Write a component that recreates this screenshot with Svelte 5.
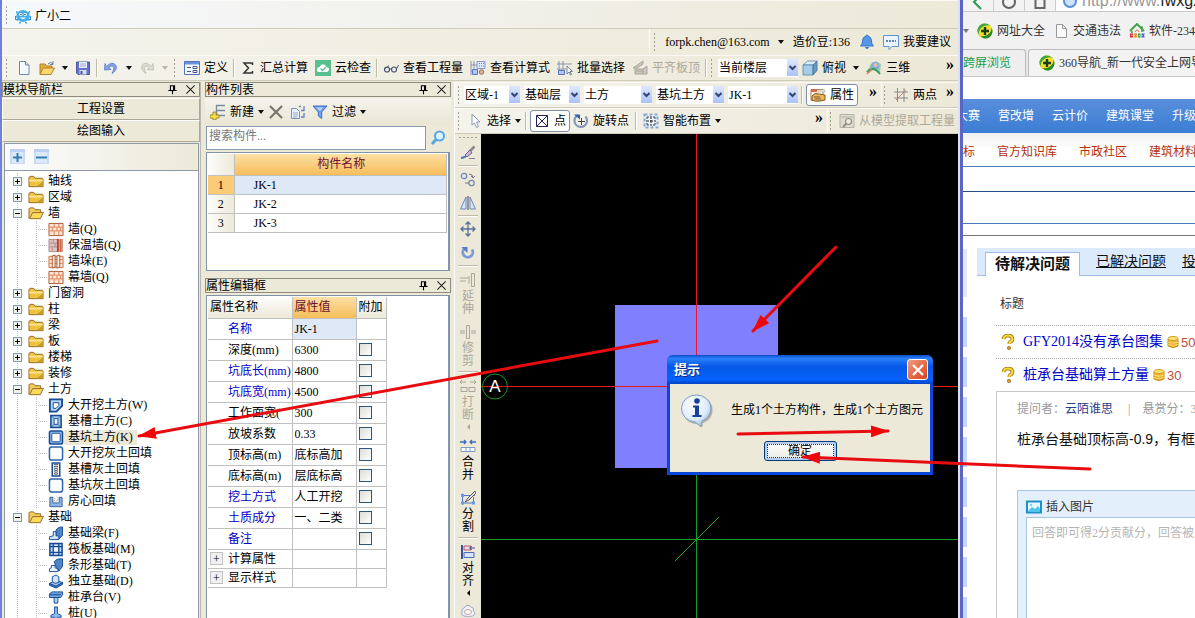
<script>
  const icons = {
    mascot: '<path d="M3 4 1 3 2 7zM13 4l2-1-1 4z" fill="#2c93d8"/><ellipse cx="8" cy="8" rx="6.6" ry="6" fill="#45aee8"/><path d="M1 8l-1 3 3 1M15 8l1 3-3 1M5 14v1.500M11 14v1.500" stroke="#2f92d4" stroke-width="1.600" fill="none"/><circle cx="5.800" cy="6.400" r="1.600" fill="#fff"/><circle cx="10.200" cy="6.400" r="1.600" fill="#fff"/><circle cx="6" cy="6.500" r=".7" fill="#124"/><circle cx="10" cy="6.500" r=".7" fill="#124"/><path d="M5 9.500q3 3 6 0z" fill="#fff"/>',
    page: '<path d="M3.500 1.500h6l3.500 3.500v9.500h-9.500z" fill="#f6f9fe" stroke="#7187a8"/><path d="M9.500 1.500v3.500h3.500" fill="#d5e0f2" stroke="#7187a8"/>',
    open: '<path d="M1 14V4h5l1.500 2H13v3" fill="#e7ac3b" stroke="#b0812c"/><path d="M1 14.500 4 8h11.500l-3.500 6.500z" fill="#ffd671" stroke="#b0812c"/><path d="M9 4q3-3 5 0M14 1v3.500h-3" stroke="#6f7f93" fill="none"/>',
    save: '<path d="M1.500 2h13v12.500H3l-1.500-1.500z" fill="#6372c6" stroke="#4c58a0"/><path d="M4 2h8v6H4z" fill="#e8ecfb"/><path d="M5 4h6M5 6h6" stroke="#a5aed8"/><path d="M4.500 10h7v4.500h-7z" fill="#d8dcf0"/><path d="M5.500 11h2v3h-2z" fill="#4c58a0"/>',
    undo: '<path d="M3.500 6.500Q9 .8 12.700 5q2.500 4.500-3.700 8.500 3-5.500 1-7.300-2-1-4 1.300L8 9.500 1.500 10 2 3.500z" fill="#85a5ea" stroke="#5675c6" stroke-width=".8"/>',
    redo: '<path d="M12.500 6.500Q7 .8 3.300 5 .8 9.500 7 13.500 4 8 6 6.200q2-1 4 1.300L8 9.500l6.500.5L14 3.500z" fill="#deddd4" stroke="#bbb9ae" stroke-width=".8"/>',
    form: '<path d="M.5 1.500h15v13H.5z" fill="#f3f7ff" stroke="#5273bd"/><path d="M1 2h14v2.500H1z" fill="#6b92dc"/><path d="M3 7.500h4M3 11.500h4" stroke="#445a8a"/><path d="M9 6.500h4v2H9zM9 10.500h4v2H9z" fill="#fff" stroke="#445a8a"/>',
    sigma: '<path d="M12.500 5V3H4l4.500 5L4 13h8.500v-2" fill="none" stroke="#333" stroke-width="1.500"/>',
    cloud: '<path d="M0 0h16v16H0z" fill="#58bf8e"/><path d="M4 12q-3-.5-2-3 .2-2 2.500-2Q6 3.500 9 4.500q2 .5 2.500 2.500 3 .5 2.500 3-.5 2-2.500 2z" fill="#fff"/><path d="M5.500 8.500 7.500 10.500 11 7" stroke="#58bf8e" fill="none" stroke-width="1.300"/>',
    glasses: '<circle cx="4" cy="9.500" r="2.500" fill="#e9eef6" stroke="#48566c" stroke-width="1.200"/><circle cx="11" cy="9.500" r="2.500" fill="#e9eef6" stroke="#48566c" stroke-width="1.200"/><path d="M6.500 9h2M1.500 9 6 5.500M13.500 9l2-4" stroke="#48566c" fill="none"/>',
    calc: '<path d="M1 1v14M4 1v14M1 5h6M1 11h4" stroke="#8a93a8" fill="none"/><path d="M7 1.500h8v7H7z" fill="#dfe8fb" stroke="#8398cc"/><path d="M9 3.500h5M9 6h5" stroke="#6781c8" stroke-dasharray="1 1"/><path d="M2.500 9.500h5v5h-5z" fill="#b5c6f2" stroke="#5c77c4"/><circle cx="11.500" cy="12" r="2.300" fill="#d8b09a" stroke="#9b7462"/>',
    batch: '<path d="M2 1v14M6 1v14M0 4h15M0 9h9" stroke="#8b95a6" fill="none"/><path d="M1.500 10.500h6v4h-6z" fill="#b2c4f2" stroke="#5673bf"/><path d="M10 6v8l2-2 1.500 3 1-.5L13 11.500h2.500z" fill="#fff" stroke="#74819a"/>',
    slab: '<path d="M1 8 11 1v3L5 8zM3 9h8v5H3zM11 9l4-3v8h-4M4 11h7" fill="#c9c7bb" stroke="#a9a79b"/>',
    cube: '<path d="M1 5 5.500 1H15l-4 4z" fill="#d9ecfa" stroke="#5483ad" stroke-width=".8"/><path d="M1 5h10v10H1z" fill="#a8cdeb" stroke="#5483ad" stroke-width=".8"/><path d="M11 5l4-4v9.500L11 15z" fill="#6798c2" stroke="#426c96" stroke-width=".8"/>',
    orbit: '<path d="M1 13 4 5l6-4 5 3-1 9-6-3z" fill="#9fcdaa"/><circle cx="9" cy="6" r="4" fill="#7fa9df"/><circle cx="9.500" cy="5" r="2" fill="#e3c0a5"/><path d="M1 12q6-7 13 2" stroke="#389f62" fill="none" stroke-width="2"/><path d="M1 14 6 9" stroke="#db7d60" stroke-width="1.500"/>',
    bell: '<path d="M8 1q1 0 1 1 3.500 1 3.500 5 0 3.500 2 5H1.500q2-1.500 2-5 0-4 3.500-5 0-1 1-1z" fill="#5596e8" stroke="#3b76c6"/><path d="M6 13h4q-.5 2-2 2t-2-2z" fill="#3b76c6"/>',
    chat: '<path d="M.5 1.500h15v11H9l-3 3v-3H.5z" fill="#eaf4ff" stroke="#5f96cf"/><path d="M3 7h10" stroke="#345f96" stroke-dasharray="2 1" stroke-width="1.300"/>',
    hand: '<path d="M1 2.500h12v11H1z" fill="#fff8e8" stroke="#b38b49"/><path d="M1 2h6v3H1z" fill="#d56b46"/><path d="M8 3h7v2H8z" fill="#eee" stroke="#999" stroke-width=".5"/><path d="M2 9q3-4 7-2l6 1v5l-5 1q-4 1-8-1z" fill="#e9b65b" stroke="#7f592c"/><path d="M4 10h6M5 12h6" stroke="#7f592c"/>',
    hash: '<path d="M4.500 1v14M11 1v14M1 5h14M1 11h14" stroke="#8a8888"/><path d="M3 13 13 3" stroke="#c07070" stroke-width=".8"/>',
    cursor: '<path d="M5 1v11l2.500-2 2 4.500 2-1L9.500 9H13z" fill="#fff" stroke="#8b9ab8"/>',
    xbox: '<path d="M2.500 2.500h11v11h-11zM2.500 2.500l11 11M13.500 2.500l-11 11" fill="none" stroke="#22265c"/>',
    rotpoint: '<path d="M12.500 3.500A6.300 6.300 0 1 1 3.500 3" fill="none" stroke="#8497b6" stroke-width="2.200"/><path d="M1 1.500h6v5z" fill="#2e66a4"/><path d="M8.500 5v7M5 8.500h7" stroke="#444"/>',
    smart: '<path d="M1.500 1.500h13v13h-13z" fill="#e8f1fc" stroke="#8fa6cc" stroke-dasharray="3 2" stroke-width="2"/><path d="M8 3v10M3 8h10" stroke="#222" stroke-dasharray="3 1"/><path d="M3 5h2V3M11 3v2h2M3 11h2v2M11 13v-2h2" stroke="#345" fill="none"/>',
    extract: '<path d="M1 1.500h14v13H1z" fill="#dddbd0" stroke="#b5b3a7"/><path d="M2 4h12" stroke="#b5b3a7"/><circle cx="9.500" cy="8.500" r="3" fill="#eeece2" stroke="#8f8d83" stroke-width="1.200"/><path d="M7.500 10.500 4 14" stroke="#8f8d83" stroke-width="2"/>',
    add: '<path d="M6 1.500h9M6 6.500h9M6 11.500h9M6.500 1v11" stroke="#7b8ba5" stroke-width="1.400" fill="none"/><path d="M3 8h3v3h3v3H6v2H3v-2H0v-3h3z" fill="#ffe23e" stroke="#8b7727" stroke-width=".8"/>',
    cross: '<path d="M2 2 14 14M14 2 2 14" stroke="#77776f" stroke-width="2.200"/>',
    copy: '<path d="M1.500 4.500h5l3 3v7h-8z" fill="#eaf0fc" stroke="#7c90bd"/><path d="M3 9h5M3 11h5M3 13h4" stroke="#93a4cb"/><path d="M9 2.500h2M14 2v4.500h-3M14 9v4h-3" fill="none" stroke="#6580c0" stroke-width="1.300"/>',
    funnel: '<path d="M1 2h14L9.700 8v6.500L6.300 12V8z" fill="#6da2ee" stroke="#416cbd"/><path d="M4 3.500h7L8 7z" fill="#bcd7fb"/>',
    lens: '<circle cx="9.500" cy="6" r="4.500" fill="#dff2ff" stroke="#55a7e4" stroke-width="2"/><path d="M6 9.500 2 14" stroke="#55a7e4" stroke-width="3"/>',
    plusbox: '<path d="M0 0h15v15H0z" fill="#cbd9f4"/><path d="M0 0h15v3H0z" fill="#bdcff5"/><path d="M2 3h11v11H2z" fill="#dce9fb"/><path d="M7.500 4v9M3 8.500h9" stroke="#327eae" stroke-width="2"/>',
    minusbox: '<path d="M0 0h15v15H0z" fill="#cbd9f4"/><path d="M0 0h15v3H0z" fill="#bdcff5"/><path d="M2 3h11v11H2z" fill="#dce9fb"/><path d="M2 8.500h11" stroke="#327eae" stroke-width="2"/>',
    folder: '<path d="M.5 13.500v-10l1-1h4l1.500 2h7.500l1 1v8z" fill="#f0c23f" stroke="#8e6b1f"/><path d="M1 6h14v2H1z" fill="#ffe693"/><path d="M9 13l6-5v5z" fill="#ce9a27"/>',
    folderopen: '<path d="M.5 13.500V3l1-1h4L7 4h6v3" fill="#f3cb58" stroke="#8e6b1f"/><path d="M1 13.500 4.500 7H16l-3.500 6.500z" fill="#fbd85e" stroke="#8e6b1f"/>',
    wall: '<path d="M.5 1.500h15v13H.5z" fill="#fde8da" stroke="#a8532c"/><path d="M1 5.500h14M1 9.500h14M6 2v3.500M11 2v3.500M4 6v3.500M9 6v3.500M13 6v3.500M6 10v4M11 10v4" stroke="#dd7a48" fill="none"/>',
    wallwarm: '<path d="M.5 1.500h10v13H.5z" fill="#dcc5c4" stroke="#b08785"/><path d="M1 5.500h9M1 9.500h9M5 2v3.500M7 6v3.500M4 10v4" stroke="#b58a89"/><path d="M9 1h6v14H9z" fill="#b4452b"/><path d="M11.500 1v14M13.500 1v14" stroke="#ffb895"/>',
    wallpier: '<path d="M.5 2.500h15v12H.5z" fill="#fde8da" stroke="#c66a3c"/><path d="M1 6h14M1 10h14" stroke="#dd7a48"/><path d="M4 2l3-1v13l-3 1zM9 2l3-1v13l-3 1z" fill="#fff3ea" stroke="#a8532c"/>',
    bigdig: '<path d="M1.500 1.500h13v7l-6 6h-7z" fill="#b2d6fa" stroke="#174a91" stroke-width="2"/><path d="M5 5h6v3L8 11H5z" fill="#fff" stroke="#174a91"/>',
    trench: '<path d="M2.500 1.500h11v13h-11z" fill="#9fc6f1" stroke="#174a91" stroke-width="1.600"/><path d="M6 5h4v6H6z" fill="#fff" stroke="#174a91"/><path d="M3 2l3 3M13 2l-3 3M3 14l3-3M13 14l-3-3" stroke="#174a91" stroke-width=".8"/>',
    pit: '<rect x="1" y="1" width="14" height="14" rx="2" fill="#8dbcf0" stroke="#174a91" stroke-width="1.600"/><rect x="3.500" y="3.500" width="9" height="9" rx="1" fill="#fff" stroke="#174a91"/>',
    fill: '<rect x="1" y="1" width="14" height="14" rx="2.500" fill="#fafdff" stroke="#2d64a8" stroke-width="1.600"/>',
    trenchfill: '<path d="M4 1h8v14H4z" fill="#fff" stroke="#174a91" stroke-width="1.600"/><path d="M6.500 2v12M9.500 2v12" stroke="#333" stroke-dasharray="1 1" stroke-width="1.500"/><path d="M8 1.500v13" stroke="#333" stroke-dasharray="1 1" stroke-dashoffset="1" stroke-width="1.500"/>',
    room: '<path d="M1.500 3.500h3v6h7v-6h3v10h-13z" fill="#8db5e8" stroke="#355e9b"/><path d="M5 8l2-2M8 8l3-3M6 4l1 1M9 3l1 1" stroke="#888"/>',
    beam: '<path d="M8 5q1-4 7-4v9l-4 4H8z" fill="#4e83c4" stroke="#174a91"/><path d="M1 14.500v-3l4-1V6h3v4.500h3v4z" fill="#cde3fa" stroke="#174a91"/>',
    raft: '<path d="M1.500 1.500h13v13h-13z" fill="#b9d8f9" stroke="#174a91" stroke-width="1.600"/><path d="M5 1v14M11 1v14M1 5h14M1 11h14" stroke="#174a91" stroke-width="1.400"/><path d="M6 6h4v4H6z" fill="#fff"/>',
    strip: '<path d="M6 4q3-4 9-3v8l-4 5-3-5z" fill="#4e83c4" stroke="#174a91"/><path d="M1 14.500v-3L3 10.500V8h4v2.500l3 1v3z" fill="#e4f1fe" stroke="#174a91"/>',
    indep: '<path d="M1 10l7-3 7 2-7 5z" fill="#9ac0ec" stroke="#174a91"/><path d="M1 10v2l7 3 7-4V9l-7 4z" fill="#3f77bd" stroke="#174a91"/><path d="M4 3l4-2 3 2v6l-4 1-3-2z" fill="#cfe3fa" stroke="#174a91"/>',
    pilecap: '<path d="M1 4l3-2h11v3l-2 3H1z" fill="#6fa3e0" stroke="#174a91"/><path d="M1 5h12M6 8h4v6H6z" fill="#a9cdf5" stroke="#174a91"/>',
    pile: '<path d="M6.500 1h3v7l4 2v2h-4L8 15l-1.500-3h-4v-2l4-2z" fill="#8dbcf0" stroke="#174a91"/>',
    brush: '<path d="M1 13q5-1 6-3" fill="none" stroke="#5373b8" stroke-width="2"/><path d="M14.500 1.500 9 7" stroke="#8a8a8a" stroke-width="2.500"/><path d="M10 5 5 10l2 2 5-4z" fill="#c9b4e0" stroke="#7b6a90"/><path d="M9 13.500h6" stroke="#8a7aa0"/>',
    copyobj: '<circle cx="4" cy="5" r="2.700" fill="none" stroke="#7088c0" stroke-width="1.300"/><circle cx="11.500" cy="12" r="2.700" fill="none" stroke="#7b8ab0" stroke-width="1.300"/><path d="M9 3q4 0 4 4M11 5l2 2 2-2M5 12h4" stroke="#778" fill="none"/>',
    mirror: '<path d="M6 2v12H.5zM10 2v12h5.500z" fill="#d5e5fb" stroke="#6d87bb"/><path d="M8 1v14" stroke="#445"/>',
    move: '<path d="M8 1v14M1 8h14M5.500 3.500 8 1l2.500 2.500M5.500 12.500 8 15l2.500-2.500M3.500 5.500 1 8l2.500 2.500M12.500 5.500 15 8l-2.500 2.500" fill="none" stroke="#5b7097" stroke-width="1.300"/>',
    rotate: '<path d="M12 4.500A5 5 0 1 1 4 4" fill="none" stroke="#7a9bdc" stroke-width="2.800"/><path d="M1.500 2h6v6z" fill="#587ac0"/>',
    extend: '<path d="M0 6h8M0 9h6M9 4v8M11.500 1.500h3v13h-3z" stroke="#a8a69a" fill="none"/>',
    trim: '<path d="M0 7h5M11 7h5M0 9h5M11 9h5M6.500 1.500h3v13h-3z" stroke="#a8a69a" fill="none"/>',
    split: '<path d="M0 4h6M10 4h6M2 2 0 4l2 2M14 2l2 2-2 2M1 9.500h6v4H1zM9 9.500h6v4H9z" stroke="#a8a69a" fill="none"/>',
    merge: '<path d="M0 4h6M10 4h6M4 2l2 2-2 2M12 2l-2 2 2 2" stroke="#3f69c0" stroke-width="1.300" fill="none"/><path d="M1 9.500h14v4H1zM6 9v5M10 9v5" stroke="#7c99c9" fill="#fff"/>',
    cut: '<path d="M1 5.500h14M1 13h14M2.500 3.500v11M13.500 7v7" stroke="#4a7bd0" fill="none"/><path d="M15 1 8 8l-3 4 4-2 7-7z" fill="#ddd" stroke="#444" stroke-width=".8"/><path d="M1 4h3v3H1zM1 11.500h3v3H1zM12 11.500h3v3h-3z" fill="#6d98e4"/>',
    align: '<path d="M2 1v14" stroke="#394ea0" stroke-width="2"/><path d="M4 2h7v4H4z" fill="#f6d9d9" stroke="#b05c6c"/><path d="M4 8.500h10v5H4z" fill="#d9e4fb" stroke="#4c6db9"/><path d="M15 4h-5M11.500 2l-2 2 2 2" stroke="#394ea0" fill="none"/>',
    cloudline: '<path d="M4 13q-4-1-2-4-1-3 2-4 3-5 7-1 3 0 2.500 4 3 3-1 5-4 1-8.500 0z" fill="#f3f3fa" stroke="#9ba6c8"/><ellipse cx="8" cy="9" rx="3.500" ry="2.500" fill="#fff" stroke="#d89a9a"/>',
    plus360: '<circle cx="8" cy="8" r="7.500" fill="#f4de2d"/><path d="M1 5Q4-1 10 .8L14 3Q8 1 4 5t-1 8Q-1 9 1 5z" fill="#3ba43a"/><path d="M15 11q-3 6-9 4l-3-2q6 1 9.500-3t1-7q3 4 1.500 8z" fill="#268a2c"/><path d="M8 4v8M4 8h8" stroke="#163e17" stroke-width="2.400"/>',
    bookmark: '<path d="M3.500 1.500h6l4 4v9h-10zM9.500 1.500v4h4" fill="#fafafa" stroke="#999"/>',
    house: '<path d="M1 8 8 1l7 7" fill="none" stroke="#49a04a" stroke-width="2"/><path d="M3 8v2M13 3v6" stroke="#49a04a" stroke-width="1.500"/><path d="M6 9q2-4 4 0" stroke="#e06a43" fill="none"/><path d="M1 12.500h3" stroke="#d33" stroke-width="4"/><path d="M5 12.500h3" stroke="#e88b2b" stroke-width="4"/><path d="M9 12.500h2.500" stroke="#3b9a48" stroke-width="4"/><path d="M12.500 12.500h3" stroke="#3a6fc9" stroke-width="4"/><path d="M0 12.500h16" stroke="#fff" stroke-dasharray="1 1.500" stroke-width=".8"/>',
    question: '<path d="M3.500 5Q4 1.500 8 1.500t4.500 3.300Q12.500 7 10 8.200 9.300 8.700 9.300 10" fill="none" stroke="#9a6b14" stroke-width="3.600"/><path d="M3.500 5Q4 1.500 8 1.500t4.500 3.300Q12.500 7 10 8.200 9.300 8.700 9.300 10" fill="none" stroke="#fbd92f" stroke-width="2.200"/><circle cx="9" cy="14" r="1.700" fill="#d79a28" stroke="#8a6015" stroke-width=".6"/>',
    coin: '<path d="M3 5v7q5 3 10 0V5z" fill="#eeb22d" stroke="#c9861b"/><ellipse cx="8" cy="4.500" rx="5" ry="2" fill="#fde37b" stroke="#d59c26"/><path d="M3 8q5 2.500 10 0M3 10.500q5 2.500 10 0" fill="none" stroke="#fce07a"/>',
    image: '<path d="M1 2.500h14v11H1z" fill="#e7f8ff" stroke="#1f8fc8" stroke-width="2"/><path d="M2 12 6 8l3 2 3-3 2 3v3H2z" fill="#4fc3ee"/><circle cx="5" cy="6" r="1.200" fill="#79d2f2"/>',
    pin: '<path d="M5 2.500h6v7H5zM9.500 3v6.500M2 9.500h12M8 10v5" fill="none" stroke="#000" stroke-width="1.600"/>',
    close: '<path d="M2 2l12 12M14 2 2 14" stroke="#222" stroke-width="1.500"/>'
  };

  const tree = [
    { t: '轴线' }, { t: '区域' },
    { t: '墙', kids: [['墙', 'Q', 'wall'], ['保温墙', 'Q', 'wallwarm'], ['墙垛', 'E', 'wallpier'], ['幕墙', 'Q', 'wall']] },
    { t: '门窗洞' }, { t: '柱' }, { t: '梁' }, { t: '板' }, { t: '楼梯' }, { t: '装修' },
    { t: '土方', kids: [['大开挖土方', 'W', 'bigdig'], ['基槽土方', 'C', 'trench'], ['基坑土方', 'K', 'pit'], ['大开挖灰土回填', '', 'fill'], ['基槽灰土回填', '', 'trenchfill'], ['基坑灰土回填', '', 'fill'], ['房心回填', '', 'room']] },
    { t: '基础', kids: [['基础梁', 'F', 'beam'], ['筏板基础', 'M', 'raft'], ['条形基础', 'T', 'strip'], ['独立基础', 'D', 'indep'], ['桩承台', 'V', 'pilecap'], ['桩', 'U', 'pile']] }
  ];

  const props = [
    ['深度(mm)', '6300', 0], ['坑底长(mm)', '4800', 1], ['坑底宽(mm)', '4500', 1], ['工作面宽(', '300', 0],
    ['放坡系数', '0.33', 0], ['顶标高(m)', '底标高加', 0], ['底标高(m)', '层底标高', 0],
    ['挖土方式', '人工开挖', 1], ['土质成分', '一、二类', 1], ['备注', '', 1]
  ];

  const combos = [['区域-1', 56], ['基础层', 56], ['土方', 68], ['基坑土方', 68], ['JK-1', 70]];

  const strip = [
    { i: 'brush' }, { sep: 1 }, { i: 'copyobj' }, { i: 'mirror' }, { sep: 1 }, { i: 'move' }, { i: 'rotate' }, { sep: 1 },
    { i: 'extend', t: '延伸', off: 1 }, { i: 'trim', t: '修剪', off: 1 }, { sep: 1 },
    { i: 'split', t: '打断', off: 1, more: 1 }, { i: 'merge', t: '合并' }, { i: 'cut', t: '分割' }, { sep: 1 },
    { i: 'align', t: '对齐', more: 1 }, { i: 'cloudline' }
  ];
</script>

{#snippet icon(name)}
  <svg class="ic" viewBox="0 0 16 16" aria-hidden="true">{@html icons[name]}</svg>
{/snippet}

{#snippet tool(name, label, off = false)}
  <button class="tool" class:off>
    {@render icon(name)}{#if label}<span>{label}</span>{/if}
  </button>
{/snippet}

{#snippet drop(off = false)}
  <button class="drop" class:off aria-label="▾"><i></i></button>
{/snippet}

{#snippet combo(label, width)}
  <span class="combo" style="width:{width}px">
    <select aria-label={label}><option>{label}</option></select>
    <svg viewBox="0 0 11 17" aria-hidden="true"><path d="M2.500 7l3 3 3-3" fill="none" stroke="#31456f" stroke-width="2" /></svg>
  </span>
{/snippet}

{#snippet caption(label)}
  <header class="caption">
    <h2>{label}</h2>
    <button>{@render icon('pin')}</button>
    <button>{@render icon('close')}</button>
  </header>
{/snippet}

<div class="desktop">
  <main class="cad">
    <div class="bar brand"><span class="grip"></span>{@render tool('mascot', '广小二')}</div>
    <div class="bar account">
      <div class="dock">
        <span class="grip"></span>
        <button class="tool">forpk.chen@163.com</button>
        {@render drop()}
        <span class="beans">造价豆:136</span>
        {@render tool('bell')}
        {@render tool('chat', '我要建议')}
      </div>
    </div>
    <div class="bar main-tools">
      <span class="grip"></span>
      {@render tool('page')}{@render tool('open')}{@render drop()}{@render tool('save')}
      <span class="sep"></span>
      {@render tool('undo')}{@render drop()}{@render tool('redo')}{@render drop(true)}
      <span class="grip"></span>
      {@render tool('form', '定义')}
      <span class="sep"></span>
      {@render tool('sigma', '汇总计算')}{@render tool('cloud', '云检查')}
      <span class="sep"></span>
      {@render tool('glasses', '查看工程量')}{@render tool('calc', '查看计算式')}{@render tool('batch', '批量选择')}{@render tool('slab', '平齐板顶', true)}
      <span class="sep"></span><span class="grip"></span>
      {@render combo('当前楼层', 80)}
      {@render tool('cube', '俯视')}{@render drop()}{@render tool('orbit', '三维')}
      <button class="more">»</button>
    </div>

    <div class="work">
      <nav class="panel modules">
        {@render caption('模块导航栏')}
        <button class="wide">工程设置</button>
        <button class="wide">绘图输入</button>
        <div class="box">
          <div class="tree-tools">{@render icon('plusbox')}{@render icon('minusbox')}</div>
          <ul class="tree">
            {#each tree as node}
              <li>
                <div class="row"><span class="toggle" class:plus={!node.kids}></span>{@render icon(node.kids ? 'folderopen' : 'folder')}<span>{node.t}</span></div>
                {#if node.kids}
                  <ul>
                    {#each node.kids as [name, key, ic]}
                      <li class="row leaf">{@render icon(ic)}<span class:current={key === 'K'}>{name}{key ? `(${key})` : ''}</span></li>
                    {/each}
                  </ul>
                {/if}
              </li>
            {/each}
          </ul>
        </div>
      </nav>

      <section class="panel parts">
        {@render caption('构件列表')}
        <div class="bar list-tools">
          {@render tool('add', '新建')}{@render drop()}{@render tool('cross')}{@render tool('copy')}{@render tool('funnel', '过滤')}{@render drop()}
        </div>
        <div class="search"><input type="text" placeholder="搜索构件..." aria-label="搜索构件" /><button aria-label="搜索">{@render icon('lens')}</button></div>
        <div class="frame names">
          <table>
            <thead><tr><th class="idx"></th><th class="hot">构件名称</th></tr></thead>
            <tbody>
              {#each [1, 2, 3] as n}
                <tr class:sel={n === 1}><th class="idx">{n}</th><td>JK-{n}</td></tr>
              {/each}
            </tbody>
          </table>
        </div>
        {@render caption('属性编辑框')}
        <div class="frame props">
          <table>
            <thead><tr><th>属性名称</th><th class="hot">属性值</th><th>附加</th></tr></thead>
            <tbody>
              <tr class="sel"><td class="blue">名称</td><td>JK-1</td><td></td></tr>
              {#each props as [name, value, blue]}
                <tr><td class:blue>{name}</td><td>{value}</td><td><input type="checkbox" aria-label={name} /></td></tr>
              {/each}
              {#each ['计算属性', '显示样式'] as name}
                <tr class="group"><td><button>+</button>{name}</td><td></td><td></td></tr>
              {/each}
            </tbody>
          </table>
        </div>
      </section>

      <section class="editor">
        <div class="bar">
          <span class="grip"></span>
          <div class="combos">{#each combos as [label, width]}{@render combo(label, width)}{/each}</div>
          <span class="sep"></span>
          <button class="tool pressed">{@render icon('hand')}<span>属性</span></button>
          <button class="more">»</button>
          <div class="tail short"><span class="grip"></span>{@render tool('hash', '两点')}<button class="more">»</button></div>
        </div>
        <div class="bar">
          <span class="grip"></span>
          {@render tool('cursor', '选择')}{@render drop()}
          <span class="sep"></span>
          <button class="tool pressed">{@render icon('xbox')}<span>点</span></button>
          {@render tool('rotpoint', '旋转点')}
          <span class="sep"></span>
          {@render tool('smart', '智能布置')}{@render drop()}
          <button class="more">»</button>
          <div class="tail"><span class="grip"></span>{@render tool('extract', '从模型提取工程量', true)}</div>
        </div>
        <div class="stage">
          <div class="strip">
            <span class="grip-h"></span>
            {#each strip as s}
              {#if s.sep}<span class="rule"></span>
              {:else}
                <button class:off={s.off} class:labelled={s.t}>
                  {@render icon(s.i)}
                  {#if s.t}<span>{s.t}</span>{/if}
                  {#if s.more}<i></i>{/if}
                </button>
              {/if}
            {/each}
          </div>
          <div class="canvas">
            <svg width="100%" height="100%" aria-hidden="true">
              <rect x="134" y="171" width="163" height="163" fill="#8080ff" />
              <g shape-rendering="crispEdges">
                <rect x="215" y="0" width="1" height="253" fill="#f01820" />
                <rect x="0" y="252" width="100%" height="1" fill="#f01820" />
                <rect x="215" y="253" width="1" height="100%" fill="#12a02c" />
                <rect x="0" y="405" width="100%" height="1" fill="#12a02c" />
              </g>
              <path d="M194 427l44-44" stroke="#12a02c" />
              <circle cx="14" cy="252.500" r="12.500" fill="#000" stroke="#149a2c" />
              <path d="M0 252.500h27" stroke="#d01420" />
              <text x="14" y="258" text-anchor="middle">A</text>
            </svg>
            <div class="dialog" role="dialog" aria-label="提示">
              <header><h2>提示</h2><button aria-label="关闭"><svg viewBox="0 0 16 16"><path d="M3 3l10 10M13 3 3 13" stroke="#fff" stroke-width="2.200" /></svg></button></header>
              <div class="msg">
                <svg viewBox="0 0 34 34" aria-hidden="true">
                  <defs><radialGradient id="bubble" cx=".4" cy=".3" r=".8"><stop offset="0" stop-color="#fff" /><stop offset=".6" stop-color="#dcebfb" /><stop offset="1" stop-color="#86acd8" /></radialGradient></defs>
                  <path d="M18 2a15 14 0 1 1-3 28 15 14 0 0 1 3-28zM16 28l6 5-1-7z" fill="#777" opacity=".5" />
                  <path d="M16 1a14.500 13.500 0 0 1 5 26l-1 6-6-5A14.500 13.500 0 0 1 16 1z" fill="url(#bubble)" stroke="#7f9dc0" />
                  <circle cx="16" cy="7" r="2.800" fill="#16409a" /><path d="M12 11.500h6v9.500h2.500v2h-9v-2H14v-7.500h-2z" fill="#16409a" />
                </svg>
                <p>生成1个土方构件，生成1个土方图元</p>
              </div>
              <button class="ok">确定</button>
            </div>
          </div>
        </div>
      </section>
    </div>
  </main>

  <aside class="browser">
    <div class="address">
      <button><svg viewBox="0 0 16 16"><path d="M11 1 4 8l7 7" fill="none" stroke="#2e9a4a" stroke-width="2" /></svg></button>
      <button><svg viewBox="0 0 16 16"><circle cx="8" cy="8" r="6" fill="none" stroke="#666" stroke-width="2" /></svg></button>
      <button><svg viewBox="0 0 16 16"><path d="M3.500 3v11h9V3" fill="none" stroke="#666" stroke-width="2" /></svg></button>
      <div class="url"><svg viewBox="0 0 16 16"><circle cx="8" cy="8" r="6" fill="#cfe0fa" stroke="#5b8fd9" stroke-width="2" /></svg><span>http://www.<b>fwxgx</b></span></div>
    </div>
    <div class="marks">
      <i class="caret"></i>
      <a href="#top">{@render icon('plus360')}网址大全</a>
      <a href="#top">{@render icon('bookmark')}交通违法</a>
      <a href="#top">{@render icon('house')}软件-2345</a>
    </div>
    <div class="tabs"><a class="green" href="#top">跨屏浏览</a><a class="on" href="#top">{@render icon('plus360')}360导航_新一代安全上网导航</a></div>
    <nav class="blue-nav"><a href="#top">大赛</a><a href="#top">营改增</a><a href="#top">云计价</a><a href="#top">建筑课堂</a><a href="#top">升级</a></nav>
    <nav class="sub-nav"><a href="#top">标</a><a href="#top">官方知识库</a><a href="#top">市政社区</a><a href="#top">建筑材料</a></nav>
    <div class="bands"></div>
    <div class="page">
      <div class="beads"></div>
      <div class="qa">
        <div class="qtabs"><a class="on" href="#top">待解决问题</a><a href="#top">已解决问题</a><a href="#top">投票</a></div>
        <div class="list">
          <h3>标题</h3>
          <div class="q">{@render icon('question')}<a href="#top">GFY2014没有承台图集</a>{@render icon('coin')}<em>50</em></div>
          <div class="q">{@render icon('question')}<a href="#top">桩承台基础算土方量</a>{@render icon('coin')}<em>30</em></div>
          <div class="detail">
            <p class="meta">提问者：<a href="#top">云陌谁思</a><span>|</span>悬赏分：30</p>
            <p class="body">桩承台基础顶标高-0.9，有框架</p>
            <div class="reply">
              <button>{@render icon('image')}插入图片</button>
              <textarea aria-label="回答" placeholder="回答即可得2分贡献分，回答被采纳"></textarea>
            </div>
          </div>
        </div>
      </div>
    </div>
  </aside>

  <svg class="ink" aria-hidden="true">
    <defs><marker id="tip" viewBox="0 0 18 12" refX="17" refY="6" markerWidth="18" markerHeight="12" markerUnits="userSpaceOnUse" orient="auto"><path d="M0 0 18 6 0 12z" fill="#f00808" /></marker></defs>
    <g stroke="#e80c10" stroke-width="3" stroke-linecap="round">
      <path d="M657 341 139 436" marker-end="url(#tip)" /><path d="M836 247 753 331" marker-end="url(#tip)" />
      <path d="M738 434 888 431" marker-end="url(#tip)" /><path d="M1090 469 803 457" marker-end="url(#tip)" />
    </g>
  </svg>
</div>

<style>
  :global(body) { margin: 0; overflow: hidden; }
  .desktop { position: relative; display: flex; height: 100vh; overflow: hidden; font: 12px/16px "Liberation Serif", "Noto Sans CJK SC", sans-serif; color: #000; white-space: nowrap; }
  .desktop * { box-sizing: border-box; }
  button, input, select, textarea { font: inherit; color: inherit; margin: 0; padding: 0; border: 0; background: none; border-radius: 0; }
  h2, h3, p, ul { margin: 0; padding: 0; font-size: 12px; font-weight: normal; list-style: none; }
  a { color: inherit; text-decoration: none; }
  .ic { width: 16px; height: 16px; flex: none; display: block; }

  .cad { flex: 1; min-width: 0; display: flex; flex-direction: column; background: #ece9d8; border-left: 2px solid #6f7fdc; border-right: 3px solid #5a65c4; box-shadow: inset -2px 0 #dfe0ee; padding-right: 2px; }
  .bar { display: flex; align-items: center; height: 26px; flex: none; padding-left: 2px; border-top: 1px solid #fbfaf4; border-bottom: 1px solid #cfccba; background: linear-gradient(90deg, #f4f3ec, #ece9d8); overflow: hidden; }
  .brand { height: 29px; background: linear-gradient(90deg, #f6f9fc, #f1f0ea 50%, #ece9d8); }
  .brand .tool { padding-top: 2px; }
  .account { justify-content: flex-end; border: 0; padding-right: 4px; }
  .dock { display: flex; align-items: center; height: 26px; padding-left: 2px; gap: 2px; border-left: 1px solid #fff; }
  .beans { margin: 0 4px; }
  .main-tools { gap: 1px; }
  .grip { width: 3px; height: 20px; flex: none; margin: 0 4px 0 1px; background: radial-gradient(circle, #a3a08f 1px, transparent 1px) 0 0 / 3px 4px; }
  .sep { width: 2px; height: 18px; flex: none; margin: 0 1px; border-left: 1px solid #bdbaa8; border-right: 1px solid #fff; }
  .tool { display: flex; align-items: center; gap: 4px; height: 22px; padding: 0 3px; flex: none; }
  .off { color: #aca899; }
  .drop { width: 12px; height: 20px; flex: none; display: grid; place-items: center; }
  .list-tools .drop, .editor .drop { width: 8px; }
  .drop i { border: 3px solid transparent; border-top: 4px solid #111; border-bottom: 0; }
  .drop.off i { border-top-color: #bbb8aa; }
  .more { margin-left: auto; padding: 0 4px 6px; font-size: 16px; font-weight: bold; line-height: 16px; }
  .tool.pressed { border: 1px solid #7f8fa8; border-radius: 3px; background: #fdfdfb; }
  .combo { display: flex; height: 18px; background: #fff; flex: none; }
  .combo select { appearance: none; flex: 1; min-width: 0; padding-left: 1px; }
  .combo svg { width: 11px; height: 17px; flex: none; background: linear-gradient(#dfe8fd, #a9c3f7); }
  .combos { display: flex; gap: 4px; }
  .editor .sep { margin: 0 3px; }

  .work { flex: 1; min-height: 0; display: flex; padding-top: 1px; }
  .panel { display: flex; flex-direction: column; flex: none; min-height: 0; }
  .modules { width: 199px; border-right: 1px solid #bab8aa; }
  .parts { width: 246px; margin-left: 4px; }
  .caption { display: flex; align-items: center; height: 15px; flex: none; border: 1px solid #8e8c80; margin: 0 0 1px; }
  .caption h2 { flex: 1; line-height: 14px; }
  .caption button { width: 18px; height: 13px; display: grid; place-items: center; }
  .caption .ic { width: 11px; height: 11px; }
  .wide { height: 22px; flex: none; border: 1px solid #aba899; border-top-color: #fff; border-left-color: #fff; }
  .box { flex: 1; min-height: 0; display: flex; flex-direction: column; margin: 1px 1px 0 2px; border: 1px solid #8d99a8; border-bottom: 0; background: #fff; overflow: hidden; }
  .tree-tools { display: flex; gap: 8px; height: 27px; flex: none; padding: 5px 5px; border-bottom: 1px solid #8d99a8; background: linear-gradient(90deg, #fbfcfe, #ece9d8); }
  .tree { padding: 2px 0 0 8px; }
  .row { display: flex; align-items: center; height: 16px; }
  .row .ic { height: 15px; }
  .row > span:last-child { padding-left: 4px; }
  .toggle { width: 9px; height: 9px; flex: none; margin-right: 6px; border: 1px solid #7b9ab8; background: linear-gradient(#000, #000) center / 5px 1px no-repeat #f1f1ee; }
  .toggle.plus { background: linear-gradient(#000, #000) center / 5px 1px no-repeat, linear-gradient(#000, #000) center / 1px 5px no-repeat, #f1f1ee; }
  .tree > li { background: linear-gradient(#bbb 50%, transparent 50%) 4px 0 / 1px 2px repeat-y; }
  .tree li ul { margin-left: 23px; background: linear-gradient(#bbb 50%, transparent 50%) 0 0 / 1px 2px repeat-y; }
  .leaf::before { content: ""; width: 12px; height: 1px; background: linear-gradient(90deg, #bbb 50%, transparent 50%) 0 0 / 2px 1px repeat-x; }
  .leaf span { padding-left: 4px; height: 15px; line-height: 15px; }
  .leaf span.current { background: #ece9d8; padding-right: 4px; }

  .list-tools { border: 0; height: 27px; padding-left: 2px; background: linear-gradient(#f5f4ec, #e9e6d5); }
  .search { display: flex; height: 24px; flex: none; margin: 1px 1px 2px; }
  .search input { flex: 1; min-width: 0; border: 1px solid #8799ad; background: #fff; padding: 0 0 4px 2px; }
  .search input::placeholder { color: #777; opacity: 1; }
  .search button { width: 24px; display: grid; place-items: center; }
  .frame { background: #fff; border: 1px solid #8194a8; border-right-width: 2px; margin: 0 1px; padding: 1px; overflow: hidden; }
  .names { height: 119px; flex: none; margin-bottom: 7px; }
  .props { flex: 1; min-height: 0; margin-top: 1px; border-bottom: 0; }
  table { border-collapse: collapse; table-layout: fixed; }
  th, td { font-weight: normal; padding: 0; border: 1px solid #c0c0c0; height: 19px; line-height: 16px; overflow: hidden; text-align: left; }
  thead th { height: 21px; background: linear-gradient(#fdfdfb, #ece9d8); border-top: 0; padding-left: 2px; }
  thead th.hot { background: linear-gradient(#fce0a4, #f6bd5a); color: #701030; }
  .names table { width: 100%; }
  .names th:first-child { border-left: 0; }
  .names .idx { width: 26px; text-align: center; background: linear-gradient(90deg, #fdfdfb, #ece9d8); padding: 0; }
  .names .hot { text-align: center; }
  .names td { padding-left: 19px; }
  .names .sel .idx { background: #fbcb78; }
  .names .sel td { background: #dfe8f6; }
  .props table { width: 179px; }
  .props th:nth-child(1) { width: 84px; }
  .props th:nth-child(2) { width: 64px; }
  .props th:first-child, .props td:first-child { border-left: 0; }
  .props tbody td { height: 21px; padding-left: 2px; }
  .props tbody td:first-child { padding-left: 20px; }
  .props .sel td:nth-child(2) { background: #dfe8f6; }
  .props .blue { color: #0000c8; }
  .props input { appearance: none; display: block; width: 13px; height: 13px; border: 1px solid #2c5580; background: linear-gradient(135deg, #dcdcd7, #fff); }
  .props tbody .group td { height: 19px; }
  .props tbody .group td:first-child { padding-left: 2px; }
  .group button { width: 13px; height: 13px; margin-right: 5px; border: 1px solid #c0c0c0; background: #f0f0f0; line-height: 10px; }

  .editor { flex: 1; min-width: 0; margin-left: 3px; border-left: 1px solid #fff; display: flex; flex-direction: column; }
  .editor > .bar { padding-left: 1px; }
  .tail { display: flex; align-items: center; flex: none; height: 26px; border-left: 1px solid #fff; }
  .short .more { margin-left: 2px; }
  .stage { flex: 1; min-height: 0; display: flex; }
  .strip { width: 26px; flex: none; display: flex; flex-direction: column; align-items: center; overflow: hidden; }
  .grip-h { width: 20px; height: 7px; flex: none; background: radial-gradient(circle, #a3a08f 1px, transparent 1px) 0 2px / 4px 3px repeat-x; }
  .rule { width: 20px; height: 2px; flex: none; border-top: 1px solid #bdbaa8; border-bottom: 1px solid #fff; }
  .strip button { width: 24px; min-height: 24px; flex: none; display: flex; flex-direction: column; align-items: center; justify-content: center; }
  .strip button.labelled { padding: 5px 0 3px; gap: 2px; }
  .strip button span { width: 12px; line-height: 13px; white-space: normal; }
  .strip i { border: 3px solid transparent; border-right: 3px solid currentColor; border-left: 0; }
  .canvas { position: relative; flex: 1; min-width: 0; background: #000; overflow: hidden; }
  .canvas > svg { display: block; }
  .canvas text { font: 17px "Liberation Sans", sans-serif; fill: #fff; }
  .dialog { position: absolute; left: 186px; top: 221px; width: 266px; background: #ece9d8; border: 3px solid #0a46d8; border-top: 0; border-radius: 6px 6px 0 0; display: flex; flex-direction: column; padding-bottom: 11px; }
  .dialog header { display: flex; align-items: center; justify-content: space-between; height: 29px; margin: 0 -3px; padding: 0 5px 0 7px; border-radius: 6px 6px 0 0; background: linear-gradient(#0a4cc8, #2a80fa 12%, #0558e8 40%, #0662fa 85%, #0443c4); color: #fff; }
  .dialog h2 { font-weight: bold; font-size: 13px; text-shadow: 1px 1px #0a2a80; }
  .dialog header button { width: 21px; height: 21px; display: grid; place-items: center; border: 1px solid #fff; border-radius: 3px; background: linear-gradient(135deg, #f09a80, #d8441c); }
  .dialog header svg { width: 16px; height: 16px; }
  .msg { display: flex; align-items: center; gap: 16px; padding: 9px 0 0 11px; height: 44px; }
  .msg svg { width: 34px; height: 34px; flex: none; }
  .msg p { padding-bottom: 2px; }
  .ok { align-self: center; width: 73px; height: 20px; margin-top: 13px; border: 1px solid #003c74; border-radius: 3px; background: linear-gradient(#fff, #ecebe5); box-shadow: inset 0 0 0 2px #b4cdf2; outline: 1px dotted #333; outline-offset: -4px; }

  .browser { width: 232px; flex: none; display: flex; flex-direction: column; overflow: hidden; background: #fff; color: #333; }
  .address { display: flex; height: 12px; flex: none; background: #f3f3f3; border-bottom: 1px solid #c8c8c8; overflow: hidden; }
  .address button { width: 31px; height: 12px; flex: none; border-right: 1px solid #ccc; display: flex; align-items: flex-end; justify-content: center; overflow: hidden; }
  .address svg { width: 16px; height: 16px; flex: none; margin-bottom: 2px; }
  .url { display: flex; align-items: flex-end; gap: 4px; flex: 1; min-width: 0; padding-left: 6px; background: #fff; font: 16px/20px "Liberation Sans", sans-serif; color: #999; }
  .url b { font-weight: normal; color: #222; }
  .marks { display: flex; align-items: center; gap: 8px; height: 37px; flex: none; background: #f1f1f1; }
  .marks a { display: flex; align-items: center; gap: 4px; }
  .caret { border: 3px solid transparent; border-top: 4px solid #777; border-bottom: 0; }
  .tabs { display: flex; gap: 2px; height: 28px; flex: none; background: #e6e6e6; border-bottom: 1px solid #c6c6c6; }
  .tabs a { display: flex; align-items: center; gap: 4px; flex: none; border: 1px solid #bbb; border-bottom: 0; border-left: 0; border-radius: 0 4px 0 0; background: #eee; }
  .tabs .green { color: #14a04a; width: 63px; }
  .tabs .on { border-left: 1px solid #bbb; border-radius: 4px 4px 0 0; padding-left: 10px; background: #f3f3f3; }
  .blue-nav { display: flex; gap: 18px; align-items: center; height: 34px; flex: none; margin-top: 22px; background: linear-gradient(#5a8edb, #3b7dd4); color: #fff; margin-left: -7px; }
  .sub-nav { display: flex; gap: 22px; align-items: center; height: 34px; flex: none; padding-top: 4px; background: linear-gradient(#efefef, #fff 50%); color: #b3300c; border-bottom: 1px solid #4a7ab8; }
  .bands { height: 69px; flex: none; border-bottom: 1px solid #777; background: linear-gradient(#234e8a, #234e8a) 0 24px / 100% 1px no-repeat, linear-gradient(#4a7ab8, #4a7ab8) 0 56px / 100% 1px no-repeat, #fff; }
  .page { flex: 1; min-height: 0; display: flex; }
  .beads { width: 4px; flex: none; margin: 13px 10px 0 0; background: linear-gradient(#e6e6f2 48px, #fff 48px 58px, transparent 58px), repeating-linear-gradient(#fff 0 0, #c6d7fb 0 18px, #fff 18px 28px, #c6d7fb 28px 40px); }
  .qa { flex: 1; min-width: 0; padding-top: 12px; display: flex; flex-direction: column; }
  .qtabs { display: flex; align-items: flex-end; height: 28px; flex: none; padding-left: 8px; background: #dcebfb; border-bottom: 1px solid #9dbde4; }
  .qtabs a { flex: none; height: 24px; line-height: 22px; font-size: 14px; margin-left: 16px; text-decoration: underline; color: #111; }
  .qtabs .on { width: 95px; height: 24px; margin: 0 0 -1px; text-align: center; font-weight: bold; text-decoration: none; font-size: 15px; background: #fff; border: 1px solid #9dbde4; border-bottom: 0; }
  .list { flex: 1; min-height: 0; margin-left: 19px; display: flex; flex-direction: column; }
  .list h3 { height: 49px; flex: none; padding: 20px 0 0 4px; }
  .q { display: flex; align-items: center; height: 33px; flex: none; padding-left: 4px; border-top: 1px dotted #aaa; font-size: 14px; }
  .q a { color: #0000c8; margin: 0 2px 0 7px; }
  .q em { font: 13px "Liberation Sans", sans-serif; color: #c0503c; }
  .detail { flex: 1; min-height: 0; display: flex; flex-direction: column; border: 1px solid #c8c8c8; border-width: 1px 0 0 1px; padding: 9px 0 0 20px; }
  .meta { color: #999; }
  .meta a { color: #27408b; }
  .meta span { margin: 0 12px 0 15px; }
  .body { font: 14px/20px "Liberation Sans", "Noto Sans CJK SC", sans-serif; margin: 12px 0 41px; color: #111; }
  .reply { flex: 1; min-height: 0; display: flex; flex-direction: column; padding-left: 8px; border: 1px solid #a9c3e2; border-width: 1px 0 0 1px; background: #e3f0fc; }
  .reply button { display: flex; align-items: center; gap: 4px; height: 26px; padding-top: 6px; flex: none; }
  .reply textarea { flex: 1; resize: none; overflow: hidden; background: #fff; border: 1px solid #a9c3e2; border-width: 1px 0 0 1px; padding: 7px 0 0 5px; white-space: pre; outline: 0; }
  .reply textarea::placeholder { color: #b5b5b5; opacity: 1; }
  .ink { position: absolute; inset: 0; width: 100%; height: 100%; pointer-events: none; }
</style>
